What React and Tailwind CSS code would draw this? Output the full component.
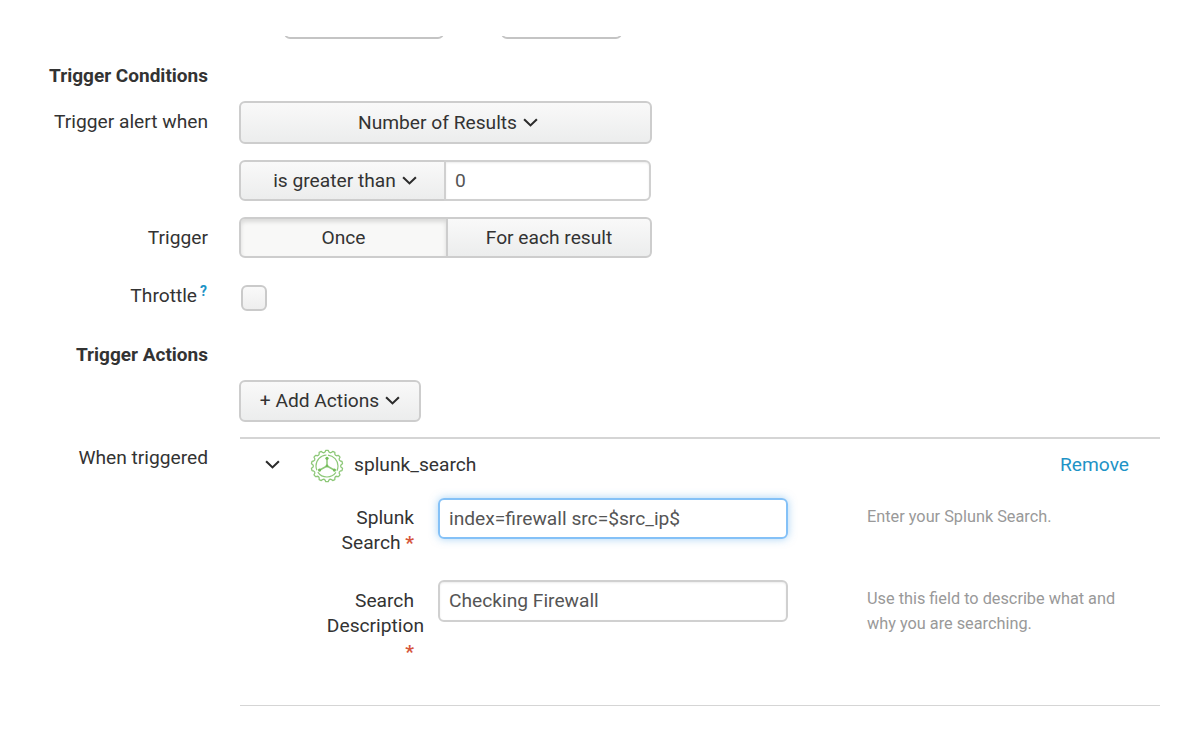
import React from "react";

const BUTTON =
  "flex items-center justify-center border-2 border-[#cdcdcd] bg-linear-to-b from-[#f9f9f9] to-[#eceded] text-[#333]";

function Chevron({ className = "" }) {
  return (
    <svg className={`h-2.5 w-[15px] shrink-0 ${className}`} viewBox="0 0 15 10" fill="none">
      <path d="M1.1 1.2 7.5 7.4 13.9 1.2" stroke="#2b2b2b" strokeWidth="2.1" />
    </svg>
  );
}

function gearPath() {
  const teeth = 14;
  const step = (Math.PI * 2) / teeth;
  const at = (r, a) => `${(17 + r * Math.sin(a)).toFixed(2)} ${(17 - r * Math.cos(a)).toFixed(2)}`;
  let d = "";
  for (let i = 0; i < teeth; i++) {
    const a = i * step;
    d += `${i ? "L" : "M"}${at(15.7, a - step * 0.17)}L${at(15.7, a + step * 0.17)}`;
    d += `L${at(14.2, a + step * 0.3)}Q${at(13.1, a + step * 0.5)} ${at(14.2, a + step * 0.7)}`;
  }
  return d + "Z";
}

function GearIcon() {
  return (
    <svg className="h-[34px] w-[34px] shrink-0" viewBox="0 0 34 34" fill="none" stroke="#8dc878" strokeWidth="1.3">
      <path d={gearPath()} strokeLinejoin="round" />
      <circle cx="17" cy="17" r="11" strokeWidth="1.2" strokeDasharray="21.04 2" strokeDashoffset="-1" transform="rotate(-90 17 17)" />
      <path d="M17 17V9.5M17 17 9.8 21M17 17l7.2 4" strokeWidth="1.5" />
      <g fill="#75bd5b" stroke="none">
        <circle cx="17" cy="9.3" r="1.6" />
        <circle cx="17" cy="17" r="1.4" />
        <circle cx="9.6" cy="21.1" r="1.6" />
        <circle cx="24.4" cy="21.1" r="1.6" />
      </g>
    </svg>
  );
}

function Row({ label, children, className = "", labelClass = "" }) {
  return (
    <div className={`flex items-start ${className}`}>
      <div className={`mr-[31px] w-[208px] shrink-0 text-right whitespace-nowrap ${labelClass}`}>{label}</div>
      {children}
    </div>
  );
}

function Field({ label, value, help, focused, className = "" }) {
  return (
    <div className={`flex items-start ${className}`}>
      <div className="flex w-[174px] shrink-0 flex-col items-end pt-2 leading-[25.4px]">{label}</div>
      <div
        className={`ml-6 flex w-[350px] shrink-0 items-center rounded-md border-2 pl-[9px] text-[#555] ${
          focused
            ? "mt-px h-[41px] border-[#84c1f7] shadow-[0_0_9px_rgba(82,168,236,0.5)]"
            : "h-[42px] border-[#d0d0d0] shadow-[inset_0_1px_2px_rgba(0,0,0,0.08)]"
        }`}
      >
        {value}
      </div>
      <div className={`ml-[79px] w-[260px] text-[16.3px] leading-[25px] text-[#999] ${focused ? "pt-[7px]" : "pt-1.5"}`}>
        {help}
      </div>
    </div>
  );
}

const star = <span className="font-bold text-[#d6563c]">*</span>;

export default function App() {
  return (
    <main className="flex h-[751px] w-[1201px] flex-col overflow-hidden bg-white pt-9 font-['Roboto',sans-serif] text-[19.2px] leading-[26px] text-[#333]">
      <div className="flex h-[3px] items-end overflow-hidden pl-[284px]">
        <div className="h-10 w-40 shrink-0 rounded-md border-2 border-[#c4c4c4]" />
        <div className="ml-[57px] h-10 w-[121px] shrink-0 rounded-md border-2 border-[#c4c4c4]" />
      </div>

      <Row className="mt-6 text-[19px] font-bold" label="Trigger Conditions" />

      <Row className="mt-3" labelClass="pt-2" label="Trigger alert when">
        <button className={`${BUTTON} h-[43px] w-[413px] gap-1.5 rounded-md pt-px pl-[5px]`}>
          Number of Results <Chevron />
        </button>
      </Row>

      <Row className="mt-4">
        <button className={`${BUTTON} h-[41px] w-[207px] gap-1.5 rounded-l-md pl-[5px]`}>
          is greater than <Chevron />
        </button>
        <div className="-ml-0.5 flex h-[41px] w-[207px] items-center rounded-r-md border-2 border-[#d0d0d0] pl-[9px] text-[#555] shadow-[inset_0_1px_2px_rgba(0,0,0,0.08)]">
          0
        </div>
      </Row>

      <Row className="mt-4" labelClass="pt-2" label="Trigger">
        <button className="flex h-[41px] w-[209px] items-center justify-center rounded-l-md border-2 border-[#cdcdcd] bg-[#f8f8f7] shadow-[inset_0_3px_4px_rgba(0,0,0,0.12)]">
          Once
        </button>
        <button className={`${BUTTON} -ml-0.5 h-[41px] w-[206px] rounded-r-md`}>For each result</button>
      </Row>

      <Row
        className="mt-[25px] h-7"
        label={
          <span className="inline-flex items-start pr-px">
            Throttle
            <span className="ml-[3px] text-[14px] leading-[17px] font-bold text-[#1e93c6]">?</span>
          </span>
        }
      >
        <div className="mt-0.5 ml-0.5 h-[26px] w-[26px] rounded-md border-2 border-[#cacaca] bg-linear-to-b from-[#f9f9f9] to-[#eeeeee]" />
      </Row>

      <Row className="mt-[31px] text-[19px] font-bold" label="Trigger Actions" />

      <Row className="mt-3">
        <button className={`${BUTTON} h-[42px] w-[182px] gap-1.5 rounded-md pb-px`}>
          + Add Actions <Chevron />
        </button>
      </Row>

      <Row className="mt-[15px]" labelClass="pt-2" label="When triggered">
        <section className="ml-px h-[269px] w-[920px] border-t-2 border-b border-[#d5d5d5]">
          <div className="flex h-[50px] items-center pr-[31px] pl-[25px]">
            <Chevron className="mt-px" />
            <div className="mt-1 ml-[30px] flex">
              <GearIcon />
            </div>
            <span className="mt-0.5 ml-2.5">splunk_search</span>
            <a className="mt-0.5 ml-auto text-[#1e93c6]">Remove</a>
          </div>
          <Field
            className="mt-2 h-[83px]"
            focused
            label={
              <>
                <span>Splunk</span>
                <span>Search {star}</span>
              </>
            }
            value="index=firewall src=$src_ip$"
            help="Enter your Splunk Search."
          />
          <Field
            label={
              <>
                <span>Search</span>
                <span className="-mr-2.5">Description</span>
                {star}
              </>
            }
            value="Checking Firewall"
            help="Use this field to describe what and why you are searching."
          />
        </section>
      </Row>
    </main>
  );
}
